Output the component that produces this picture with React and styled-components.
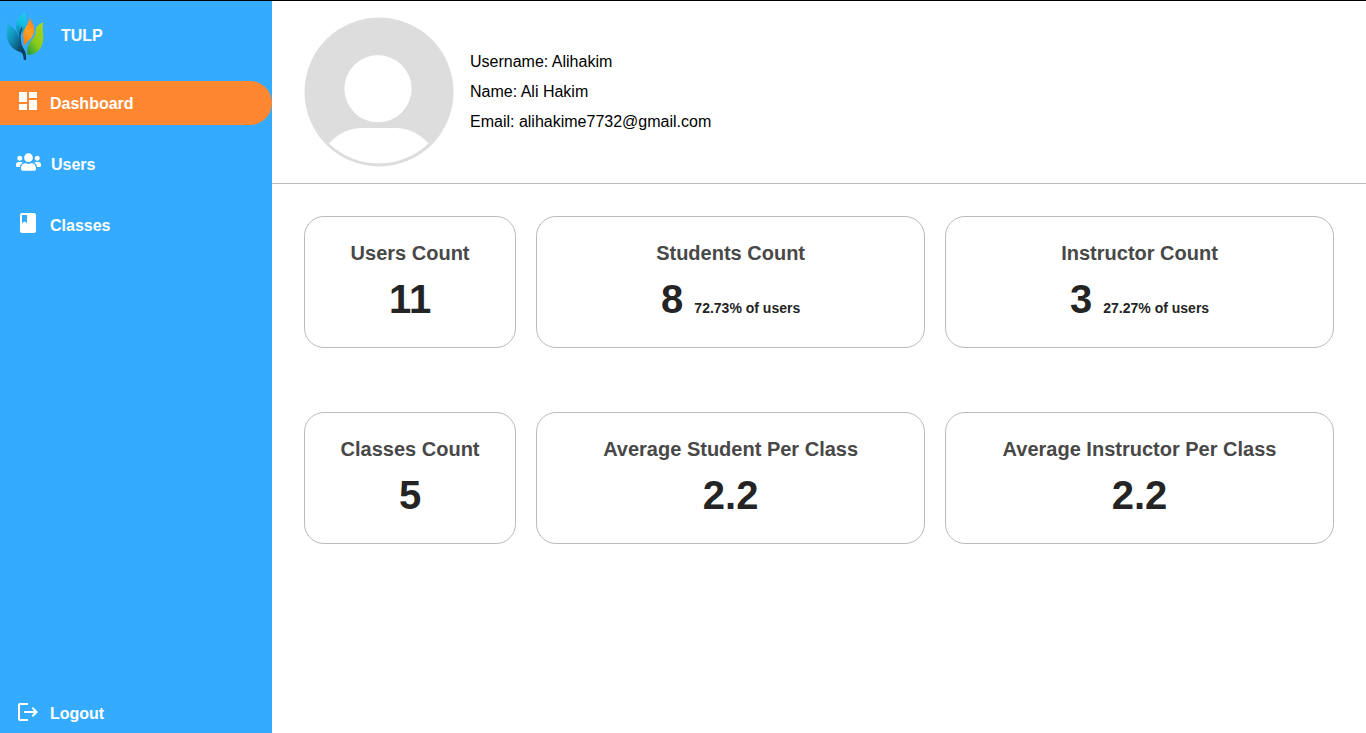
import React from "react";
import styled, { createGlobalStyle } from "styled-components";
import { MdDashboard, MdClass, MdLogout } from "react-icons/md";
import { FaUsers } from "react-icons/fa";

const GlobalStyle = createGlobalStyle`
  *, *::before, *::after { box-sizing: border-box; }
  body {
    margin: 0;
    background: #fff;
    color: #000;
    font: 16px/18px "Liberation Sans", Arial, sans-serif;
  }
  h2, p, ul { margin: 0; padding: 0; }
`;

const Page = styled.div`
  display: flex;
  height: 100vh;
  border-top: 1px solid #000;
`;

const Sidebar = styled.aside`
  display: flex;
  flex: 0 0 272px;
  flex-direction: column;
  background: #34abff;
  color: #fff;
`;

const Brand = styled.a`
  display: flex;
  align-items: center;
  gap: 17px;
  padding: 10px 6px 20px;
  color: inherit;
  font-weight: 700;
  line-height: 50px;
  text-decoration: none;

  svg { display: block; }
`;

const NavList = styled.ul`
  display: flex;
  flex: 1;
  flex-direction: column;
  gap: 17px;
  list-style: none;
`;

const NavLink = styled.a`
  display: flex;
  gap: 10px;
  padding: 8px 16px 6px;
  border-radius: 0 22px 22px 0;
  background: ${({ $active }) => ($active ? "#ff872f" : "transparent")};
  color: inherit;
  font-weight: 700;
  line-height: 30px;
  text-decoration: none;
`;

const LogoutButton = styled.button`
  display: flex;
  gap: 10px;
  padding: 8px 16px 5px;
  border: 0;
  background: none;
  color: inherit;
  font: inherit;
  font-weight: 700;
  line-height: 28px;
  cursor: pointer;
`;

const IconSlot = styled.span`
  display: flex;
  align-items: center;
  height: 24px;
`;

const UsersIcon = styled(FaUsers)`
  width: 25px;
  height: 20px;
`;

const Main = styled.main`
  flex: 1;
  min-width: 0;
  overflow: auto;
`;

const Profile = styled.header`
  display: flex;
  align-items: center;
  gap: 16px;
  padding: 16px 32px;
  border-bottom: 1px solid #bbb;
`;

const ProfileDetails = styled.div`
  display: flex;
  flex-direction: column;
  gap: 12px;
`;

const Stats = styled.section`
  display: grid;
  grid-template-columns: 6fr 11fr 11fr;
  gap: 64px 20px;
  padding: 32px;
`;

const StatCard = styled.article`
  padding: 24px 16px;
  border: 1px solid #bbb;
  border-radius: 20px;
  text-align: center;
`;

const StatTitle = styled.h2`
  color: #484848;
  font-size: 20px;
  line-height: 24px;
  white-space: nowrap;
`;

const StatValue = styled.p`
  margin-top: 10px;
  color: #242424;
  font-size: 40px;
  font-weight: 700;
  line-height: 48px;
  white-space: nowrap;

  small {
    font-size: 14px;
    line-height: 16px;
  }
`;

const Logo = () => (
  <svg width="38" height="50" viewBox="18 33 114 150" aria-hidden="true">
    <defs>
      <linearGradient id="sky" x1="0.6" y1="0" x2="0.4" y2="1">
        <stop offset="0" stopColor="#1cd0ea" />
        <stop offset="0.55" stopColor="#14b8e0" />
        <stop offset="1" stopColor="#0c7fae" />
      </linearGradient>
      <linearGradient id="deep" x1="0" y1="0" x2="0.8" y2="1">
        <stop offset="0" stopColor="#1ac0e0" />
        <stop offset="0.4" stopColor="#1190ba" />
        <stop offset="0.75" stopColor="#0b5072" />
        <stop offset="1" stopColor="#082c42" />
      </linearGradient>
      <linearGradient id="flame" x1="0.7" y1="0" x2="0.2" y2="1">
        <stop offset="0" stopColor="#ff8414" />
        <stop offset="0.5" stopColor="#ffa126" />
        <stop offset="1" stopColor="#f8780c" />
      </linearGradient>
      <linearGradient id="leaf" x1="0.9" y1="0" x2="0.2" y2="1">
        <stop offset="0" stopColor="#a9d41e" />
        <stop offset="0.6" stopColor="#8acb1c" />
        <stop offset="1" stopColor="#2f9f38" />
      </linearGradient>
    </defs>
    <path fill="url(#sky)" d="M75 34C62 48 48 58 48 78C48 88 51 96 58 105C67 98 80 88 80 70C80 57 73 47 75 34Z" />
    <path fill="url(#deep)" d="M21 65C26 78 19 93 20 106C22 132 38 149 60 156C69 159 71 167 71 178L78 181C80 160 74 148 65 138C58 129 60 114 53 99C45 85 29 80 21 65Z" />
    <path fill="none" stroke="#0b4866" strokeWidth="4" strokeLinecap="round" d="M65 84C59 99 58 114 62 130C65 147 75 152 75 177" />
    <path fill="url(#flame)" d="M87 53C90 69 76 79 71 93C66 109 74 121 71 139C79 125 99 117 102 97C105 79 96 64 87 53Z" />
    <path fill="url(#leaf)" d="M130 67C118 73 107 78 107 94C108 116 84 123 82 148C81 155 82 160 82 165C110 163 126 147 129 123C132 104 125 88 130 67Z" />
  </svg>
);

const Avatar = () => (
  <svg width="150" height="150" viewBox="0 0 150 150" role="img" aria-label="Profile picture">
    <circle cx="75" cy="75" r="74.5" fill="#ddd" />
    <circle cx="74" cy="71.7" r="33.6" fill="#fff" />
    <path fill="#fff" d="M25 126.5C34 116 46 111 58 111H91C105 111 116 117 124.5 126.5A72 72 0 0 1 25 126.5Z" />
  </svg>
);

const links = [
  { label: "Dashboard", href: "#dashboard", icon: <MdDashboard size={24} />, active: true },
  { label: "Users", href: "#users", icon: <UsersIcon /> },
  { label: "Classes", href: "#classes", icon: <MdClass size={24} /> },
];

const stats = [
  { title: "Users Count", value: "11" },
  { title: "Students Count", value: "8", note: "72.73% of users" },
  { title: "Instructor Count", value: "3", note: "27.27% of users" },
  { title: "Classes Count", value: "5" },
  { title: "Average Student Per Class", value: "2.2" },
  { title: "Average Instructor Per Class", value: "2.2" },
];

export default function App() {
  return (
    <>
      <GlobalStyle />
      <Page>
        <Sidebar>
          <Brand href="#home">
            <Logo />
            <span>TULP</span>
          </Brand>
          <NavList>
            {links.map(({ label, href, icon, active }) => (
              <li key={label}>
                <NavLink href={href} $active={active} aria-current={active ? "page" : undefined}>
                  <IconSlot>{icon}</IconSlot>
                  {label}
                </NavLink>
              </li>
            ))}
          </NavList>
          <LogoutButton type="button">
            <IconSlot><MdLogout size={24} /></IconSlot>
            Logout
          </LogoutButton>
        </Sidebar>
        <Main>
          <Profile>
            <Avatar />
            <ProfileDetails>
              <p>Username: Alihakim</p>
              <p>Name: Ali Hakim</p>
              <p>Email: alihakime7732@gmail.com</p>
            </ProfileDetails>
          </Profile>
          <Stats>
            {stats.map(({ title, value, note }) => (
              <StatCard key={title}>
                <StatTitle>{title}</StatTitle>
                <StatValue>
                  {value}
                  {note && <> <small>{note}</small></>}
                </StatValue>
              </StatCard>
            ))}
          </Stats>
        </Main>
      </Page>
    </>
  );
}
